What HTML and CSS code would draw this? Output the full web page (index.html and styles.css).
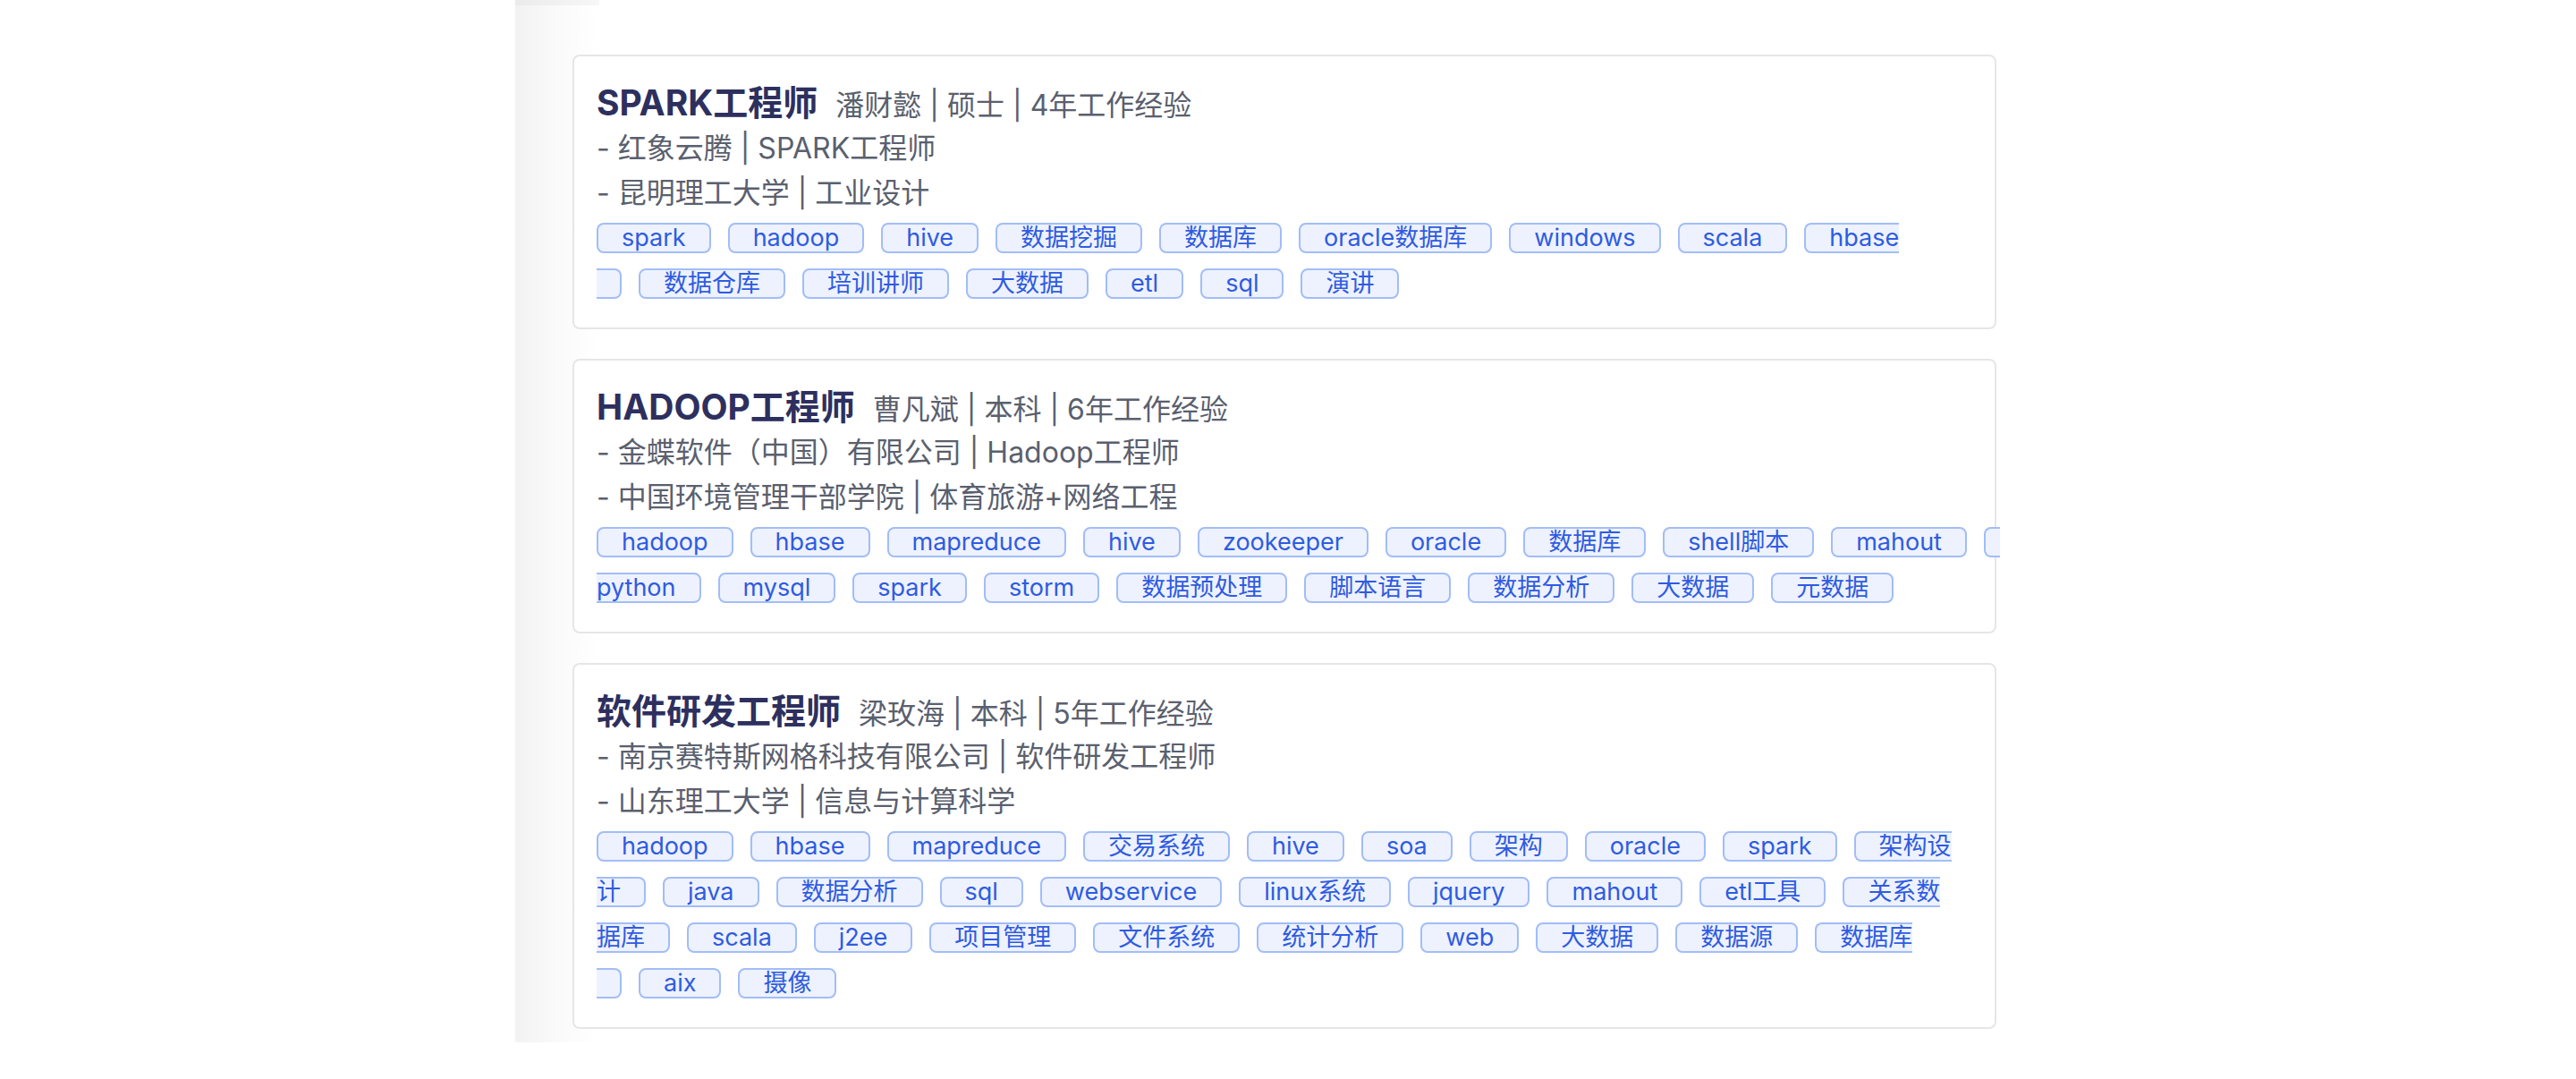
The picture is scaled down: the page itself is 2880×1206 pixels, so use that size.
FILE: index.html
```html
<!DOCTYPE html>
<html lang="zh-CN">
<head>
<meta charset="utf-8">
<title>简历列表</title>
<link rel="stylesheet" href="styles.css">
</head>
<body>
<div class="panel">
  <div class="top-strip"></div>
  <div class="list">
    <div class="card">
      <div class="title-row"><span class="title">SPARK工程师</span><span class="sub">潘财懿 | 硕士 | 4年工作经验</span></div>
      <div class="line">- 红象云腾 | SPARK工程师</div>
      <div class="line">- 昆明理工大学 | 工业设计</div>
      <div class="tags">
        <div class="tag-row"><span class="tag">spark</span><span class="tag">hadoop</span><span class="tag">hive</span><span class="tag">数据挖掘</span><span class="tag">数据库</span><span class="tag">oracle数据库</span><span class="tag">windows</span><span class="tag">scala</span><span class="tag open">hbase</span></div>
        <div class="tag-row"><span class="tag close"></span><span class="tag">数据仓库</span><span class="tag">培训讲师</span><span class="tag">大数据</span><span class="tag">etl</span><span class="tag">sql</span><span class="tag">演讲</span></div>
      </div>
    </div>
    <div class="card">
      <div class="title-row"><span class="title">HADOOP工程师</span><span class="sub">曹凡斌 | 本科 | 6年工作经验</span></div>
      <div class="line">- 金蝶软件（中国）有限公司 | Hadoop工程师</div>
      <div class="line">- 中国环境管理干部学院 | 体育旅游+网络工程</div>
      <div class="tags">
        <div class="tag-row"><span class="tag">hadoop</span><span class="tag">hbase</span><span class="tag">mapreduce</span><span class="tag">hive</span><span class="tag">zookeeper</span><span class="tag">oracle</span><span class="tag">数据库</span><span class="tag">shell脚本</span><span class="tag">mahout</span><span class="tag open stub"></span></div>
        <div class="tag-row"><span class="tag close">python</span><span class="tag">mysql</span><span class="tag">spark</span><span class="tag">storm</span><span class="tag">数据预处理</span><span class="tag">脚本语言</span><span class="tag">数据分析</span><span class="tag">大数据</span><span class="tag">元数据</span></div>
      </div>
    </div>
    <div class="card">
      <div class="title-row"><span class="title">软件研发工程师</span><span class="sub">梁玫海 | 本科 | 5年工作经验</span></div>
      <div class="line">- 南京赛特斯网格科技有限公司 | 软件研发工程师</div>
      <div class="line">- 山东理工大学 | 信息与计算科学</div>
      <div class="tags">
        <div class="tag-row"><span class="tag">hadoop</span><span class="tag">hbase</span><span class="tag">mapreduce</span><span class="tag">交易系统</span><span class="tag">hive</span><span class="tag">soa</span><span class="tag">架构</span><span class="tag">oracle</span><span class="tag">spark</span><span class="tag open">架构设</span></div>
        <div class="tag-row"><span class="tag close">计</span><span class="tag">java</span><span class="tag">数据分析</span><span class="tag">sql</span><span class="tag">webservice</span><span class="tag">linux系统</span><span class="tag">jquery</span><span class="tag">mahout</span><span class="tag">etl工具</span><span class="tag open">关系数</span></div>
        <div class="tag-row"><span class="tag close">据库</span><span class="tag">scala</span><span class="tag">j2ee</span><span class="tag">项目管理</span><span class="tag">文件系统</span><span class="tag">统计分析</span><span class="tag">web</span><span class="tag">大数据</span><span class="tag">数据源</span><span class="tag open">数据库</span></div>
        <div class="tag-row"><span class="tag close"></span><span class="tag">aix</span><span class="tag">摄像</span></div>
      </div>
    </div>
  </div>
</div>
</body>
</html>
```

FILE: styles.css
```css
html, body {
  margin: 0;
  padding: 0;
  background: #ffffff;
}

body {
  font-family: "Inter", "Noto Sans CJK SC", sans-serif;
  width: 2880px;
  height: 1206px;
  overflow: hidden;
}

.panel {
  margin-left: 576px;
  width: 1720px;
  padding-bottom: 15px;
  background: linear-gradient(to right, #f2f2f2 0, #f9f9f9 40px, #ffffff 92px);
}

.top-strip {
  width: 94px;
  height: 6px;
  background: linear-gradient(to right, #ebebeb, #f7f7f7);
}

.list {
  margin-top: 55px;
  margin-left: 64px;
  display: flex;
  flex-direction: column;
  gap: 33px;
}

.card {
  width: 1592px;
  box-sizing: border-box;
  border: 2px solid #e6e6e6;
  border-radius: 8px;
  background: #ffffff;
  padding: 26px 25px 32px 25px;
}

.title-row {
  display: flex;
  align-items: baseline;
  gap: 20px;
  height: 52px;
  line-height: 52px;
}

.title {
  font-size: 39px;
  font-weight: 700;
  color: #2d305e;
}

.sub {
  font-size: 32px;
  color: #5a606e;
}

.line {
  font-size: 32px;
  line-height: 50px;
  height: 50px;
  color: #5a606e;
  white-space: nowrap;
}

.tags {
  margin-top: 8px;
  display: flex;
  flex-direction: column;
  gap: 17px;
}

.tag-row {
  display: flex;
  gap: 19px;
  white-space: nowrap;
}

.tag {
  box-sizing: border-box;
  height: 34px;
  padding: 0 26px;
  border: 2px solid #a2bdf7;
  border-radius: 8px;
  background: #edf2fe;
  color: #2f5be2;
  font-size: 27px;
  line-height: 30px;
  white-space: nowrap;
  flex: none;
}

.tag.open {
  border-right: 0;
  padding-right: 0;
  border-top-right-radius: 0;
  border-bottom-right-radius: 0;
}

.tag.close {
  border-left: 0;
  padding-left: 0;
  border-top-left-radius: 0;
  border-bottom-left-radius: 0;
}

.tag.stub {
  padding-left: 16px;
}
```
